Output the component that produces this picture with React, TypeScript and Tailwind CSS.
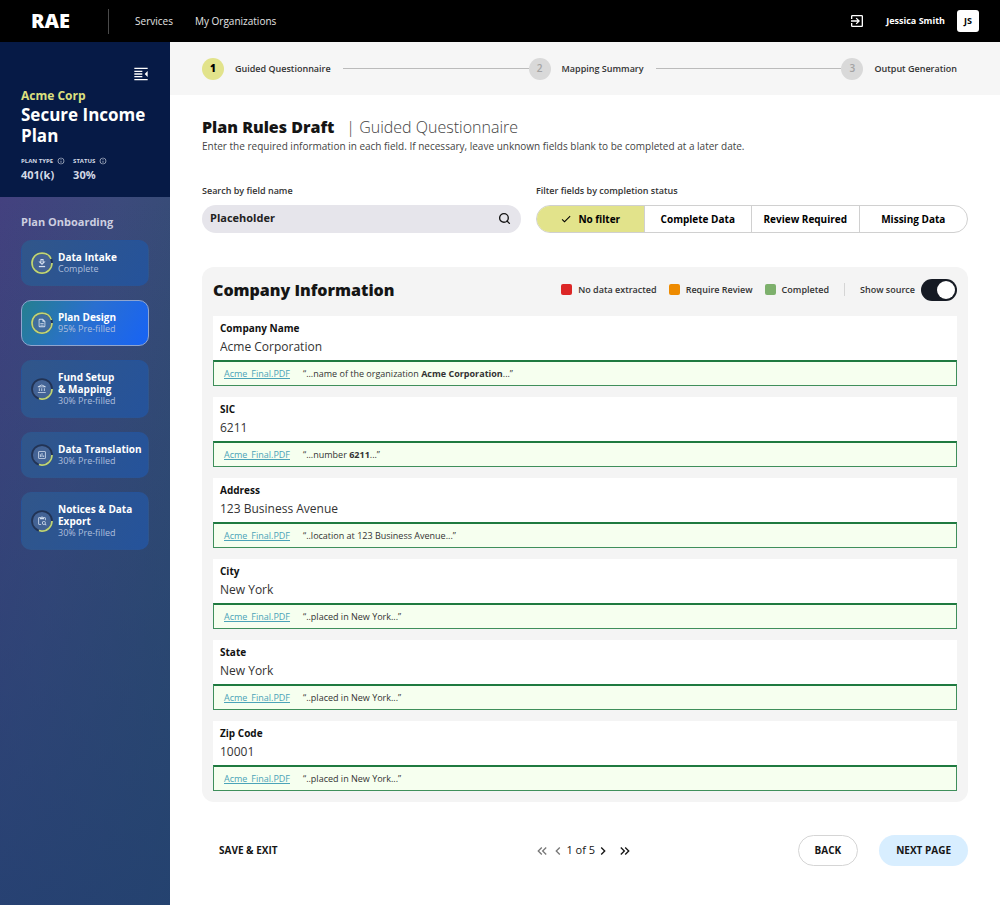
import {useState} from "react";
import type {ReactNode} from "react";
import clsx from "clsx";
import {Search} from "lucide-react";
import {
    MdCheck,
    MdChevronLeft,
    MdChevronRight,
    MdExitToApp,
    MdInfoOutline,
    MdKeyboardDoubleArrowLeft,
    MdKeyboardDoubleArrowRight,
    MdOutlineAccountBalance,
    MdOutlineContentPasteSearch,
    MdOutlineDescription,
    MdOutlineInsertChart,
} from "react-icons/md";

type Field = {
    id: string;
    label: string;
    value: string;
    source: ReactNode;
};

const fields: Field[] = [
    {
        id: "company-name",
        label: "Company Name",
        value: "Acme Corporation",
        source: <>“...name of the organization <b>Acme Corporation</b>...”</>,
    },
    {id: "sic", label: "SIC", value: "6211", source: <>“...number <b>6211</b>...”</>},
    {id: "address", label: "Address", value: "123 Business Avenue", source: "“..location at 123 Business Avenue...”"},
    {id: "city", label: "City", value: "New York", source: "“..placed in New York...”"},
    {id: "state", label: "State", value: "New York", source: "“..placed in New York...”"},
    {id: "zip", label: "Zip Code", value: "10001", source: "“..placed in New York...”"},
];

const filters = ["No filter", "Complete Data", "Review Required", "Missing Data"];

const steps = ["Guided Questionnaire", "Mapping Summary", "Output Generation"];

const legend = [
    {label: "No data extracted", color: "bg-[#dc2626]"},
    {label: "Require Review", color: "bg-[#ee8b00]"},
    {label: "Completed", color: "bg-[#7db06c]"},
];

const IntakeIcon = () => (
    <svg viewBox="0 0 24 24" className="size-full" fill="none" stroke="currentColor" strokeWidth="2.5">
        <path d="M9.5 3.5h5v6h3L12 15 6.500 9.500h3z"/>
        <path d="M4.500 20.500h15" strokeWidth="3"/>
    </svg>
);

const CollapseIcon = () => (
    <svg viewBox="0 0 24 24" className="size-4" fill="currentColor">
        <path d="M2 2.500h20v2H2zM2 7h12v2H2zM2 11h12v2H2zM2 15h12v2H2zM2 19.500h20v2H2zM22 7.500v9L17.500 12z"/>
    </svg>
);

const tasks = [
    {title: ["Data Intake"], note: "Complete", progress: 93, icon: <IntakeIcon/>},
    {title: ["Plan Design"], note: "95% Pre-filled", progress: 95, icon: <MdOutlineDescription className="size-full"/>, active: true},
    {title: ["Fund Setup", "& Mapping"], note: "30% Pre-filled", progress: 30, icon: <MdOutlineAccountBalance className="size-full"/>},
    {title: ["Data Translation"], note: "30% Pre-filled", progress: 30, icon: <MdOutlineInsertChart className="size-full"/>},
    {title: ["Notices & Data", "Export"], note: "30% Pre-filled", progress: 30, icon: <MdOutlineContentPasteSearch className="size-full"/>},
];

const ProgressRing = ({progress, children}: { progress: number; children: ReactNode }) => (
    <span className="relative flex size-[22px] shrink-0 items-center justify-center text-[#d5e0f0]">
        <svg viewBox="0 0 22 22" className="absolute inset-0 size-full" fill="none" strokeWidth="1.75">
            <circle cx="11" cy="11" r="10" fill="#4d6a99" fillOpacity="0.7" stroke="#223354"/>
            <circle cx="11" cy="11" r="10" stroke="#bfd577" pathLength="100" strokeDasharray={`${progress} 100`}/>
        </svg>
        <span className="relative block size-[10px]">{children}</span>
    </span>
);

const Header = () => (
    <header className="flex h-[42px] shrink-0 items-center bg-black pr-[21px] pl-[31px] text-white">
        <a href="#" className="text-[20px] font-extrabold">RAE</a>
        <nav className="ml-[38px] flex h-[25px] items-center gap-[22px] border-l border-[#4a4a4a] pl-[26px] text-[10px] text-[#e5e5e5]">
            <a href="#">Services</a>
            <a href="#">My Organizations</a>
        </nav>
        <div className="ml-auto flex items-center">
            <button type="button" aria-label="Sign out" className="mr-[21px]">
                <MdExitToApp className="size-4"/>
            </button>
            <span className="mr-3 text-[9px] font-bold">Jessica Smith</span>
            <span className="flex size-[22px] items-center justify-center rounded-[3px] bg-white text-[9px] font-bold text-black">
                JS
            </span>
        </div>
    </header>
);

const Sidebar = () => (
    <aside className="flex w-[170px] shrink-0 flex-col bg-[linear-gradient(100deg,#453f80_0%,#3c4a7c_45%,#2e4f6e_100%)]">
        <div className="flex h-[155px] flex-col bg-[#061a46] px-[21px] pt-6 text-white">
            <button type="button" aria-label="Collapse sidebar" className="self-end">
                <CollapseIcon/>
            </button>
            <p className="mt-[6px] text-[12px] leading-4 font-bold text-[#dde07f]">Acme Corp</p>
            <h2 className="text-[17px] leading-[21px] font-bold">Secure Income Plan</h2>
            <dl className="mt-[11px] flex gap-2 font-bold text-[#d3d9e5]">
                <div>
                    <dt className="flex items-center gap-1 text-[6px] leading-2">PLAN TYPE <MdInfoOutline className="size-2"/></dt>
                    <dd className="mt-[2px] text-[11px] leading-4">401(k)</dd>
                </div>
                <div>
                    <dt className="flex items-center gap-1 text-[6px] leading-2">STATUS <MdInfoOutline className="size-2"/></dt>
                    <dd className="mt-[2px] text-[11px] leading-4">30%</dd>
                </div>
            </dl>
        </div>
        <div className="grow bg-linear-to-b from-transparent to-[#223f70]/80 px-[21px] pt-4">
            <h3 className="text-[11px] leading-[18px] font-bold text-[#cdcfe0]">Plan Onboarding</h3>
            <nav className="mt-[9px] flex flex-col gap-[14px]">
                {tasks.map((task) => (
                    <a
                        key={task.note + task.title[0]}
                        href="#"
                        className={clsx(
                            "flex items-center gap-[5px] rounded-[10px] border py-[10px] pl-[9px] text-white",
                            task.active
                                ? "border-[#8fa5cf] bg-[linear-gradient(120deg,#257f8f,#2a6fd0_50%,#1763f5)]"
                                : "border-transparent bg-[linear-gradient(120deg,#31568a,#25539b)]",
                        )}
                    >
                        <ProgressRing progress={task.progress}>{task.icon}</ProgressRing>
                        <span className="flex flex-col">
                            {task.title.map((line) => (
                                <span key={line} className="text-[10px] leading-3 font-bold">{line}</span>
                            ))}
                            <span className="text-[9px] leading-3 text-[#aebfdd]">{task.note}</span>
                        </span>
                    </a>
                ))}
            </nav>
        </div>
    </aside>
);

const Stepper = () => (
    <ol className="flex h-[53px] items-center bg-[#f6f6f6] pr-[43px] pl-8">
        {steps.map((step, index) => (
            <li key={step} className={clsx("flex items-center", index < steps.length - 1 && "grow")}>
                <span
                    className={clsx(
                        "flex size-[22px] items-center justify-center rounded-full text-[10px]",
                        index === 0 ? "bg-[#e2e38b] font-extrabold text-black" : "bg-[#d9d9d9] font-semibold text-[#a3a3a3]",
                    )}
                >
                    {index + 1}
                </span>
                <span className="ml-[11px] text-[9px] font-semibold text-[#333]">{step}</span>
                {index < steps.length - 1 && <span className="ml-3 h-px grow bg-[#bbb]"/>}
            </li>
        ))}
    </ol>
);

const FieldRow = ({field, showSource}: { field: Field; showSource: boolean }) => (
    <div className="bg-white">
        <div className="flex h-11 flex-col px-[7px] pt-1">
            <label htmlFor={field.id} className="text-[10px] leading-4 font-bold text-[#111]">{field.label}</label>
            <input id={field.id} defaultValue={field.value} className="h-5 w-full text-[12px] text-[#333] outline-none"/>
        </div>
        {showSource && (
            <div className="flex h-[26px] items-center gap-[13px] border border-t-2 border-[#3f8f5b] border-t-[#1f7a40] bg-[#f6ffef] px-[10px] text-[9px] text-[#333]">
                <a href="#" className="text-[#4ba3b8] underline">Acme_Final.PDF</a>
                <span>{field.source}</span>
            </div>
        )}
    </div>
);

export default function App() {
    const [filter, setFilter] = useState(filters[0]);
    const [showSource, setShowSource] = useState(true);

    return (
        <div className="flex min-h-screen flex-col bg-white font-['Open_Sans',sans-serif] text-[#151515]">
            <Header/>
            <div className="flex grow">
                <Sidebar/>
                <div className="min-w-0 grow">
                    <Stepper/>
                    <main className="px-8 pt-[21px]">
                        <h1 className="flex items-center text-[16px] leading-[22px] font-extrabold">
                            Plan Rules Draft
                            <span className="ml-3 font-light text-[#444]">| Guided Questionnaire</span>
                        </h1>
                        <p className="text-[10px] leading-4 text-[#444]">
                            Enter the required information in each field. If necessary, leave unknown fields blank to be completed at a later date.
                        </p>

                        <div className="mt-[31px] flex gap-[15px]">
                            <div className="min-w-0 flex-[319]">
                                <label htmlFor="search" className="block text-[9px] leading-3 font-semibold text-[#333]">
                                    Search by field name
                                </label>
                                <div className="mt-2 flex h-7 items-center rounded-full bg-[#e6e5eb] pr-[10px] pb-px pl-2">
                                    <input
                                        id="search"
                                        type="text"
                                        placeholder="Placeholder"
                                        className="min-w-0 grow text-[11px] font-bold outline-none placeholder:text-[#222]"
                                    />
                                    <button type="button" aria-label="Search">
                                        <Search className="size-[13px]" strokeWidth={2.5}/>
                                    </button>
                                </div>
                            </div>
                            <div className="min-w-0 flex-[432]" role="group" aria-labelledby="filter-label">
                                <span id="filter-label" className="block text-[9px] leading-3 font-semibold text-[#333]">
                                    Filter fields by completion status
                                </span>
                                <div className="mt-2 grid h-7 grid-cols-4 divide-x divide-[#d0d0d0] overflow-hidden rounded-full border border-[#d0d0d0]">
                                    {filters.map((name) => (
                                        <button
                                            key={name}
                                            type="button"
                                            aria-pressed={filter === name}
                                            onClick={() => setFilter(name)}
                                            className={clsx(
                                                "flex items-center justify-center gap-[6px] text-[10px] font-bold text-black",
                                                filter === name && "bg-[#e2e38b]",
                                            )}
                                        >
                                            {filter === name && <MdCheck className="size-3"/>}
                                            {name}
                                        </button>
                                    ))}
                                </div>
                            </div>
                        </div>

                        <section className="mt-[34px] rounded-xl bg-[#f4f4f4] px-[11px] pb-[11px]">
                            <div className="flex h-[49px] items-center pb-1">
                                <h2 className="text-[16px] font-extrabold">Company Information</h2>
                                <ul className="ml-auto flex gap-3 text-[9px] font-semibold text-[#333]">
                                    {legend.map((item) => (
                                        <li key={item.label} className="flex items-center gap-[6px]">
                                            <span className={clsx("size-[11px] rounded-[2px]", item.color)}/>
                                            {item.label}
                                        </li>
                                    ))}
                                </ul>
                                <span className="mx-[15px] h-[13px] w-px bg-[#d5d5d5]"/>
                                <label className="flex items-center gap-[6px] text-[9px] font-semibold text-[#333]">
                                    Show source
                                    <input
                                        type="checkbox"
                                        role="switch"
                                        checked={showSource}
                                        onChange={(e) => setShowSource(e.target.checked)}
                                        className="flex h-[22px] w-9 appearance-none items-center rounded-full bg-[#8b8f96] px-[2px] before:size-[18px] before:rounded-full before:bg-white checked:justify-end checked:bg-[#161b24]"
                                    />
                                </label>
                            </div>
                            <div className="flex flex-col gap-[11px]">
                                {fields.map((field) => (
                                    <FieldRow key={field.id} field={field} showSource={showSource}/>
                                ))}
                            </div>
                        </section>

                        <footer className="flex items-center justify-between pt-[33px] pb-8">
                            <div className="flex w-[168px] pl-[17px]">
                                <button type="button" className="text-[10px] font-bold">SAVE & EXIT</button>
                            </div>
                            <nav aria-label="Pagination" className="flex items-center text-[11px]">
                                <button type="button" aria-label="First page" className="text-[#777]">
                                    <MdKeyboardDoubleArrowLeft className="size-4"/>
                                </button>
                                <button type="button" aria-label="Previous page" className="text-[#777]">
                                    <MdChevronLeft className="size-4"/>
                                </button>
                                <span>1 of 5</span>
                                <button type="button" aria-label="Next page">
                                    <MdChevronRight className="size-4"/>
                                </button>
                                <button type="button" aria-label="Last page" className="ml-[6px]">
                                    <MdKeyboardDoubleArrowRight className="size-4"/>
                                </button>
                            </nav>
                            <div className="flex gap-[21px] text-[10px] font-bold">
                                <button type="button" className="h-[31px] rounded-full border border-[#d5d5d5] px-4">BACK</button>
                                <button type="button" className="h-[31px] rounded-full bg-[#d8eeff] px-[17px]">NEXT PAGE</button>
                            </div>
                        </footer>
                    </main>
                </div>
            </div>
        </div>
    );
}
